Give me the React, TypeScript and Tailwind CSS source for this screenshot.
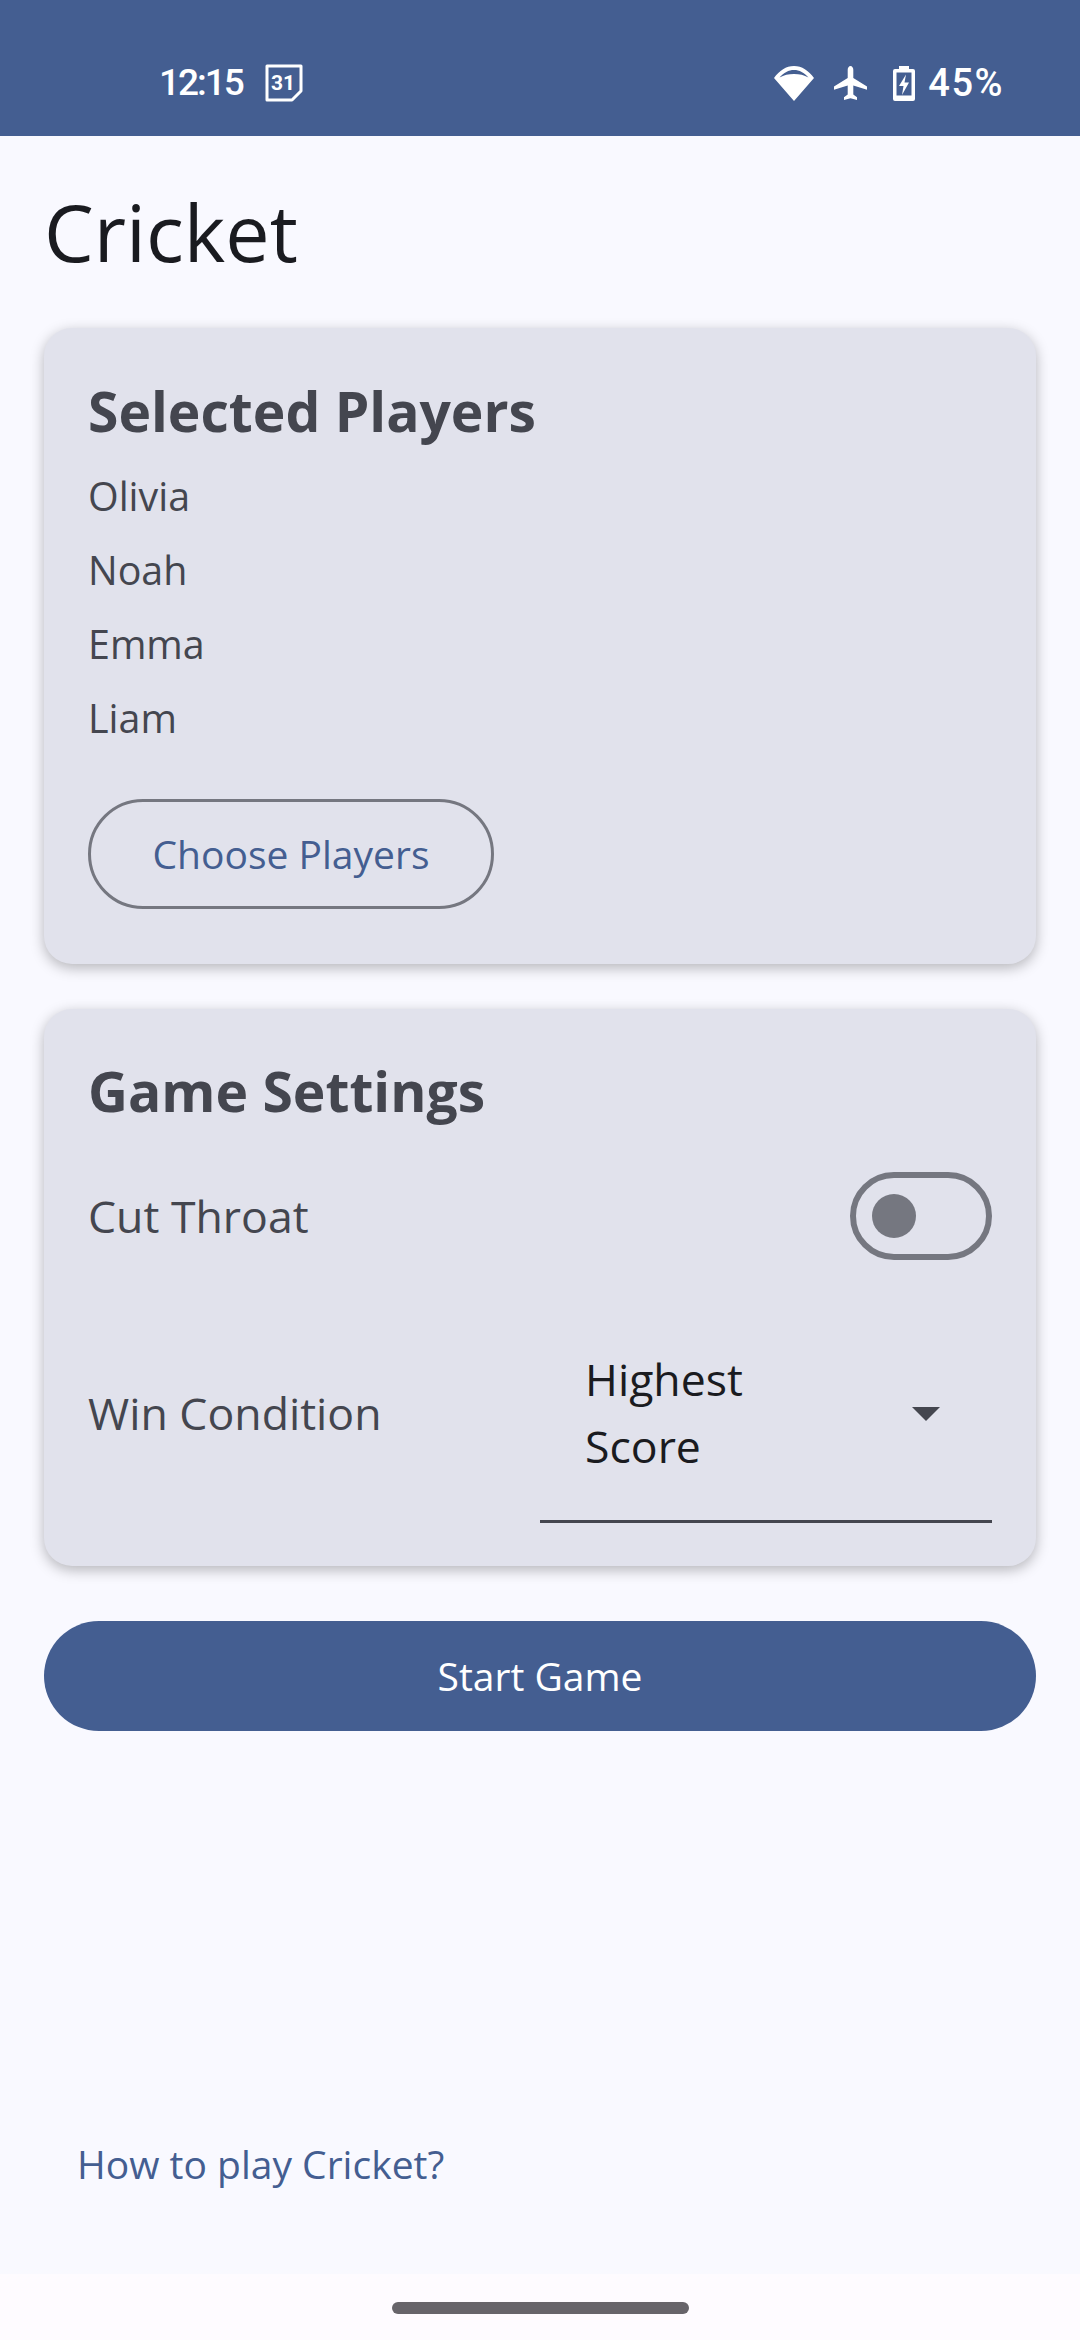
import React from 'react';

const font = { fontFamily: '"Open Sans", sans-serif' };

const players = ['Olivia', 'Noah', 'Emma', 'Liam'];

const StatusBar = () => (
  <div className="h-[136px] bg-[#445e91] flex items-start justify-between pl-[159px] pr-[76px] pt-[62px] text-white" style={{ fontFamily: 'Roboto, sans-serif' }}>
    <div className="flex items-center gap-[22px] h-[42px]">
      <span className="text-[37px] font-medium leading-[42px] tracking-[-2px]">12:15</span>
      <svg width="38" height="38" viewBox="0 0 38 38" fill="none">
        <path d="M2 2h34v25L27 36H2z" stroke="white" strokeWidth="3" strokeLinejoin="round" />
        <text x="18" y="26" fontSize="21" fontWeight="700" fill="white" textAnchor="middle" fontFamily="Roboto, sans-serif">31</text>
      </svg>
    </div>
    <div className="flex items-center h-[42px]">
      <svg width="40" height="35" viewBox="0 0 40 35" fill="white" className="mr-[20px]">
        <path d="M20 35 0 12C5.500 4.500 12 0 20 0s14.500 4.500 20 12zM5.500 11.500C10 9 14.500 8 20 8S30 9 34.500 11.500C30 6.500 25.500 4 20 4S10 6.500 5.500 11.500z" fillRule="evenodd" />
      </svg>
      <svg width="33" height="35" viewBox="0 0 33 35" fill="white" className="mr-[26px]">
        <path d="M16.500 0c1.600 0 2.800 1.800 2.800 3.800V12L33 20.500v3.300l-13.700-4.300v9l3.700 2.800V34l-6.500-1.800L10 34v-2.700l3.700-2.800v-9L0 23.800v-3.300L13.700 12V3.800C13.700 1.800 14.900 0 16.500 0z" />
      </svg>
      <svg width="22" height="35" viewBox="0 0 22 35" className="mr-[13px]">
        <path d="M6 0h10v3h4a2 2 0 0 1 2 2v28a2 2 0 0 1-2 2H2a2 2 0 0 1-2-2V5a2 2 0 0 1 2-2h4z" fill="white" />
        <path d="M3.500 6.500h15v23h-15z" fill="#445e91" />
        <path d="M13 8.500 6 20h4.500L9 29l7-12.500h-4.500z" fill="white" />
      </svg>
      <span className="text-[38px] font-medium leading-[42px] tracking-[1.5px]">45%</span>
    </div>
  </div>
);

const Card = ({ className, children }: { className: string; children: React.ReactNode }) => (
  <div className={`rounded-[28px] bg-[#e1e2ec] px-[44px] shadow-[0_4px_14px_rgba(0,0,0,0.28)] ${className}`}>{children}</div>
);

export default function App() {
  return (
    <div className="w-[1080px] h-[2340px] overflow-hidden bg-[#fefbff] flex flex-col" style={font}>
      <StatusBar />
      <div className="h-[2138px] bg-[#f9f9ff] flex flex-col px-[44px]">
        <h1 className="text-[79px] leading-[100px] text-[#1a1b20] mt-[46px]">Cricket</h1>
        <Card className="mt-[46px] pt-[51px] pb-[55px]">
          <h2 className="text-[55.200px] leading-[64px] font-bold text-[#44464f]">Selected Players</h2>
          <ul className="mt-[16px] text-[39.400px] leading-[74px] text-[#44464f]">
            {players.map((p) => (
              <li key={p}>{p}</li>
            ))}
          </ul>
          <button className="mt-[44px] block w-[406px] h-[110px] rounded-full border-[3px] border-[#757780] text-[39px] text-[#445e91]">
            Choose Players
          </button>
        </Card>
        <Card className="mt-[45px] pt-[50px] pb-[43px]">
          <h2 className="text-[55.200px] leading-[64px] font-bold text-[#44464f]">Game Settings</h2>
          <div className="mt-[49px] flex items-center justify-between h-[88px]">
            <span className="text-[44.600px] text-[#44464f]">Cut Throat</span>
            <div className="w-[142px] h-[88px] rounded-full border-[6px] border-[#757780] flex items-center pl-[16px]">
              <div className="w-[44px] h-[44px] rounded-full bg-[#757780]" />
            </div>
          </div>
          <div className="mt-[43px] flex items-center justify-between">
            <span className="text-[44.600px] text-[#44464f]">Win Condition</span>
            <div className="w-[452px] h-[220px] border-b-[3px] border-[#44464f] flex items-center justify-between pl-[45px] pr-[52px]">
              <span className="w-[200px] text-[44.600px] leading-[67px] text-[#1a1b20]">Highest Score</span>
              <svg width="28" height="14" viewBox="0 0 28 14" className="mt-[4px]">
                <path d="M0 0h28L14 14z" fill="#44464f" />
              </svg>
            </div>
          </div>
        </Card>
        <button className="mt-[55px] h-[110px] shrink-0 rounded-full bg-[#445e91] text-white text-[39px]">Start Game</button>
        <a className="mt-[407px] ml-[33px] text-[39px] leading-[52px] text-[#445e91]">How to play Cricket?</a>
      </div>
      <div className="flex-1 flex justify-center pt-[28px]">
        <div className="w-[297px] h-[12px] rounded-full bg-[#67646a]" />
      </div>
    </div>
  );
}
